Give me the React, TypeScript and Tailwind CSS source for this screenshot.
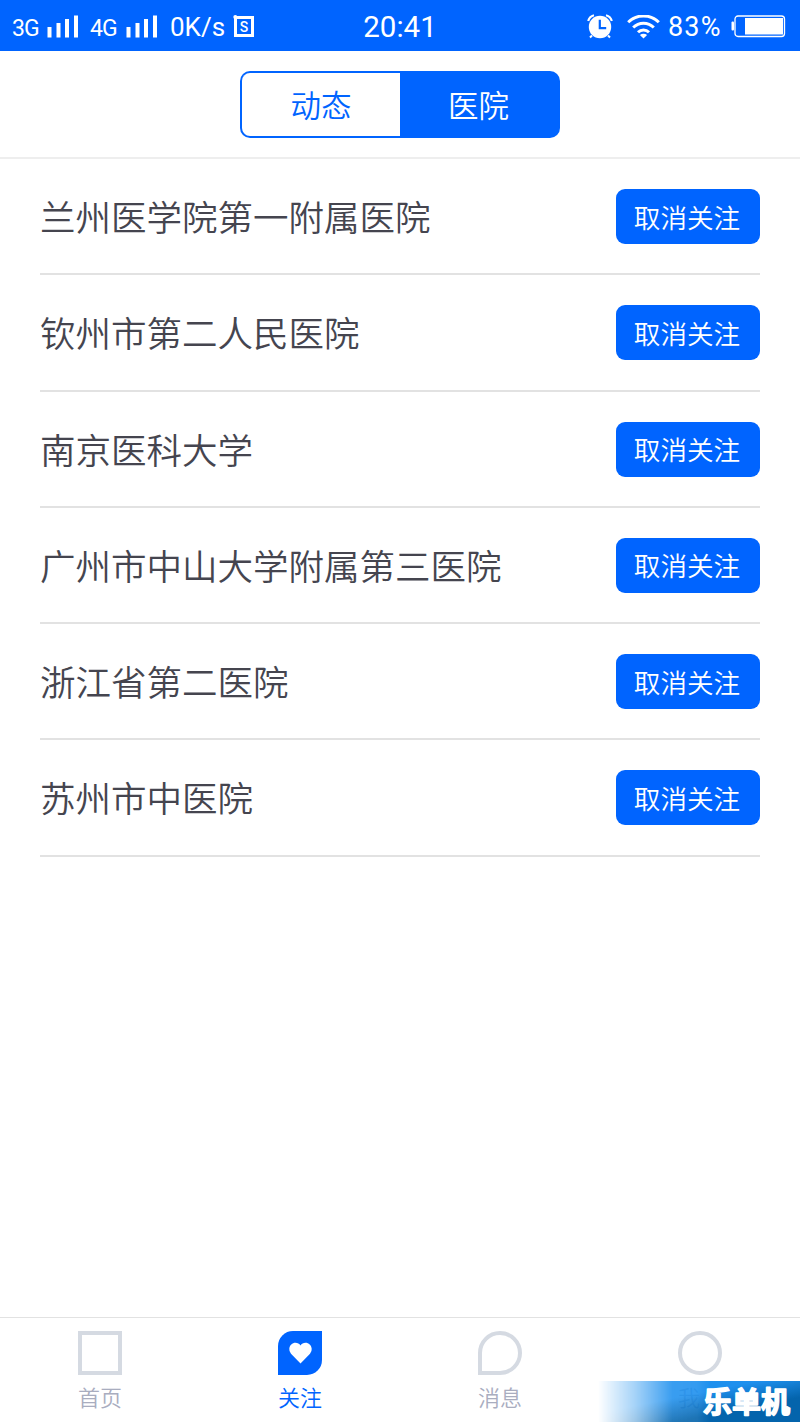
import { clsx } from 'clsx';

const hospitals = [
  '兰州医学院第一附属医院',
  '钦州市第二人民医院',
  '南京医科大学',
  '广州市中山大学附属第三医院',
  '浙江省第二医院',
  '苏州市中医院',
];

const tabs = [
  { key: 'home', label: '首页' },
  { key: 'follow', label: '关注' },
  { key: 'message', label: '消息' },
  { key: 'me', label: '我' },
];

function Signal() {
  return (
    <svg width="32" height="24" viewBox="0 0 32 24" fill="currentColor">
      <rect x="0.5" y="12" width="4" height="10.5" />
      <rect x="9.5" y="8" width="4" height="14.5" />
      <rect x="18" y="4" width="4" height="18.5" />
      <rect x="27" y="0.5" width="4" height="22" />
    </svg>
  );
}

function AlarmIcon() {
  return (
    <svg width="26" height="26" viewBox="0 0 26 26" fill="none">
      <circle cx="13" cy="13" r="11.2" fill="#fff" />
      <path d="M1.2 7A8 8 0 0 1 7 1.2M19 1.2A8 8 0 0 1 24.8 7" stroke="#fff" strokeWidth="2.2" />
      <path d="M5 21.5l-2 2M21 21.5l2 2" stroke="#fff" strokeWidth="2" />
      <path d="M12.8 5.8v8.4h6.4" stroke="#0064ff" strokeWidth="2.2" />
    </svg>
  );
}

function WifiIcon() {
  return (
    <svg width="33" height="24" viewBox="0 0 33 24" fill="none" stroke="#fff" strokeWidth="3">
      <path d="M1.2 7.3a21.6 21.6 0 0 1 30.6 0" />
      <path d="M6.2 12.5a14.6 14.6 0 0 1 20.6 0" />
      <path d="M11 17.3a7.8 7.8 0 0 1 11 0" />
      <path d="M16.5 23.5l-3.6-3.4a5.2 5.2 0 0 1 7.2 0z" fill="#fff" stroke="none" />
    </svg>
  );
}

function BatteryIcon() {
  return (
    <svg width="55" height="24" viewBox="0 0 55 24" fill="none">
      <rect x="0.5" y="6.5" width="2.5" height="9" rx="1" fill="#fff" />
      <rect x="4" y="1" width="49.5" height="20.5" rx="3" stroke="#fff" strokeWidth="1.3" />
      <rect x="14" y="3" width="38" height="16.5" fill="#fff" />
    </svg>
  );
}

function StatusBar() {
  return (
    <div className="grid h-[51px] grid-cols-[350px_100px_350px] items-center bg-[#0064ff] pt-[3px] font-['Roboto','Noto_Sans_CJK_SC',sans-serif] font-normal text-white">
      <div className="flex items-center pl-3">
        <span className="w-[35px] pt-1 text-[23px] leading-6 tracking-[-1px]">3G</span>
        <Signal />
        <span className="ml-[11px] w-[36px] pt-1 text-[23px] leading-6 tracking-[-1px]">4G</span>
        <Signal />
        <span className="ml-3 w-[63px] text-[26px] leading-6">0K/s</span>
        <svg width="22" height="24" viewBox="0 0 22 24" fill="none">
          <path d="M2.5 2.5h17v18h-17z" stroke="#fff" strokeWidth="3" />
          <circle cx="2.3" cy="2" r="2" fill="#fff" />
          <text x="11" y="16.5" textAnchor="middle" fontSize="14" fontWeight="500" fill="#fff">S</text>
        </svg>
      </div>
      <div className="text-center text-[29.5px] leading-6">20:41</div>
      <div className="flex items-center justify-end pr-[14px]">
        <AlarmIcon />
        <span className="w-[14px]" />
        <WifiIcon />
        <span className="ml-2 w-[63px] text-[27px] leading-6 tracking-[1.2px]">83%</span>
        <BatteryIcon />
      </div>
    </div>
  );
}

function TabIcon({ name }: { name: string }) {
  if (name === 'follow') {
    return (
      <div className="flex size-11 items-center justify-center rounded-tl-[15px] rounded-br-[15px] bg-[#0064ff]">
        <svg width="23" height="22" viewBox="0 0 23 22" fill="#fff">
          <path d="M11.5 21.5L2 11.7A6.2 6.2 0 0 1 .3 6.8C.6 3.2 3.3.8 6.5.8c2.1 0 3.9 1 5 2.7 1.1-1.7 2.9-2.7 5-2.7 3.2 0 5.9 2.4 6.2 6a6.2 6.2 0 0 1-1.7 4.9z" />
        </svg>
      </div>
    );
  }
  return (
    <div
      className={clsx(
        'size-11 border-4 border-[#d5dae2]',
        name === 'message' && 'rounded-full rounded-bl-none',
        name === 'me' && 'rounded-full',
      )}
    />
  );
}

function Watermark() {
  return (
    <div className="absolute right-0 bottom-0 h-[41px] w-[206px]">
      <div className="h-full bg-linear-to-br from-[#1e90ee] from-40% to-[#0464ac] to-70% [mask-image:linear-gradient(to_right,transparent_2%,rgba(0,0,0,0.4)_20%,rgba(0,0,0,0.88)_38%,rgba(0,0,0,0.9)_50%,black_56%)]" />
      <svg
        className="absolute top-0 right-0"
        width="100"
        height="41"
        viewBox="0 0 100 41"
        fill="#fff"
        stroke="#fff"
        strokeWidth="1.6"
        strokeLinejoin="round"
        fontSize="29"
        fontWeight="700"
      >
        <text x="3" y="31.5">乐单机</text>
      </svg>
    </div>
  );
}

export default function App() {
  return (
    <div className="relative flex h-[1422px] w-[800px] flex-col overflow-hidden bg-white font-['Noto_Sans_CJK_SC',sans-serif] font-[350]">
      <StatusBar />

      <header className="flex h-[108px] justify-center border-b-2 border-[#eeeeee] pt-5">
        <div className="flex h-[67px] w-80 text-[30.5px]">
          <button className="w-40 rounded-l-[10px] border-2 border-r-0 border-[#0064ff] text-[#0064ff]">
            动态
          </button>
          <button className="w-40 rounded-r-[10px] bg-[#0064ff] pr-[3px] text-white">医院</button>
        </div>
      </header>

      <ul className="flex-1 px-10">
        {hospitals.map((name) => (
          <li
            key={name}
            className="flex h-[116.25px] items-center justify-between border-b-2 border-[#e2e2e2]"
          >
            <span className="pb-px text-[35.5px] text-[#45454f]">{name}</span>
            <button className="mt-px h-[55px] w-36 rounded-[9px] bg-[#0064ff] pr-0.5 text-[26.6px] text-white">
              取消关注
            </button>
          </li>
        ))}
      </ul>

      <nav className="grid h-[105px] grid-cols-4 border-t border-[#e2e2e2]">
        {tabs.map((tab) => (
          <div
            key={tab.key}
            className={clsx(
              'flex flex-col items-center pt-[13px] text-[22px]',
              tab.key === 'follow' ? 'text-[#0064ff]' : 'text-[#a9adbf]',
            )}
          >
            <TabIcon name={tab.key} />
            <span className={clsx('mt-[3px] leading-9', tab.key === 'me' && 'pr-[22px]')}>
              {tab.label}
            </span>
          </div>
        ))}
      </nav>

      <Watermark />
    </div>
  );
}
